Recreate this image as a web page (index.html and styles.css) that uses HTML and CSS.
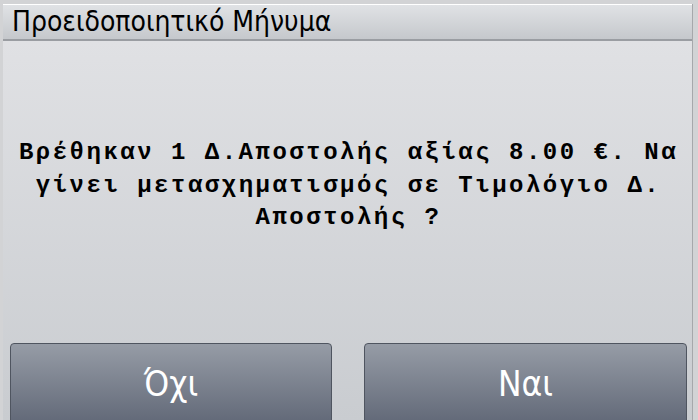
FILE: index.html
```html
<!DOCTYPE html>
<html>
<head>
<meta charset="utf-8">
<link rel="stylesheet" href="styles.css">
</head>
<body>
<div class="frame">
  <div class="window">
    <div class="titlebar"><span class="title">Προειδοποιητικό Μήνυμα</span></div>
    <div class="content">
      <p class="message">Βρέθηκαν 1 Δ.Αποστολής αξίας 8.00 €. Να γίνει μετασχηματισμός σε Τιμολόγιο Δ. Αποστολής ?</p>
      <div class="buttons">
        <button class="btn">Όχι</button>
        <button class="btn">Ναι</button>
      </div>
    </div>
  </div>
</div>
</body>
</html>
```
FILE: styles.css
```css
html, body {
  margin: 0;
  padding: 0;
  height: 100%;
  overflow: hidden;
}
body {
  background: #d2d3d5;
}
.frame {
  padding: 4px 5px 0 3px;
  height: 100%;
  box-sizing: border-box;
}
.window {
  height: 100%;
  display: flex;
  flex-direction: column;
  border-right: 1px solid #a6a8ab;
  box-sizing: border-box;
  overflow: hidden;
}
.titlebar {
  flex: 0 0 37px;
  box-sizing: border-box;
  border-top: 1px solid #ffffff;
  border-bottom: 2px solid #9a9da2;
  background: linear-gradient(#e0e2e5, #c5c8cc);
  padding-left: 9px;
  display: flex;
  align-items: center;
}
.title {
  font-family: "DejaVu Sans Condensed", "DejaVu Sans", sans-serif;
  font-stretch: condensed;
  font-size: 28px;
  color: #000;
  line-height: 1;
}
.content {
  flex: 1 1 auto;
  min-height: 0;
  background: linear-gradient(#e0e1e4, #c9ccd0);
  padding: 96px 5px 0 7px;
  display: flex;
  flex-direction: column;
}
.message {
  margin: 0;
  font-family: "Liberation Mono", "Courier New", monospace;
  font-weight: bold;
  font-size: 24px;
  letter-spacing: 2.5px;
  line-height: 32.5px;
  text-align: center;
  color: #000;
}
.buttons {
  margin-top: 108px;
  display: grid;
  grid-template-columns: 322px 323px;
  justify-content: space-between;
  flex-shrink: 0;
}
.btn {
  height: 100px;
  border: 1px solid #4f5560;
  border-radius: 4px;
  background: linear-gradient(#969ca6 0%, #626978 80%);
  color: #ffffff;
  font-family: "DejaVu Sans Condensed", "DejaVu Sans", sans-serif;
  font-stretch: condensed;
  font-size: 35px;
  padding: 0 0 17px 0;
  display: flex;
  align-items: center;
  justify-content: center;
  box-sizing: border-box;
}
```
